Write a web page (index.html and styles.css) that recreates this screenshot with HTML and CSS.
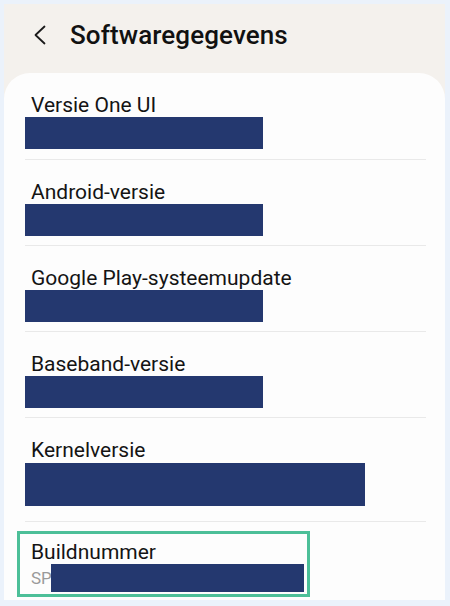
FILE: index.html
```html
<!DOCTYPE html>
<html lang="nl">
<head>
    <meta charset="UTF-8">
    <meta name="viewport" content="width=device-width, initial-scale=1.0">
    <title>Softwaregegevens</title>
    <link rel="stylesheet" href="styles.css">
</head>
<body>
    <div class="screen">
        <div class="app-bar">
            <button class="back-btn" aria-label="Terug">
                <svg xmlns="http://www.w3.org/2000/svg" width="14" height="20" viewBox="0 0 14 20" fill="none" stroke="#1a1a1a" stroke-width="1.8" stroke-linecap="round" stroke-linejoin="round">
                    <polyline points="11.5 1.5 2.5 10 11.5 18.5"></polyline>
                </svg>
            </button>
            <h1>Softwaregegevens</h1>
        </div>

        <div class="card">
            <div class="info-row">
                <div class="label">Versie One UI</div>
                <div class="redacted"></div>
            </div>
            <div class="info-row">
                <div class="label">Android-versie</div>
                <div class="redacted"></div>
            </div>
            <div class="info-row">
                <div class="label">Google Play-systeemupdate</div>
                <div class="redacted"></div>
            </div>
            <div class="info-row">
                <div class="label">Baseband-versie</div>
                <div class="redacted"></div>
            </div>
            <div class="info-row info-row-tall">
                <div class="label">Kernelversie</div>
                <div class="redacted redacted-wide"></div>
            </div>
            <div class="info-row info-row-last">
                <div class="highlight">
                    <div class="label">Buildnummer</div>
                    <div class="value-line">
                        <span class="value">SP</span>
                        <div class="redacted redacted-build"></div>
                    </div>
                </div>
            </div>
        </div>
    </div>
</body>
</html>
```

FILE: styles.css
```css
* {
    margin: 0;
    padding: 0;
    box-sizing: border-box;
    font-family: Roboto, 'Noto Sans', sans-serif;
}

body {
    width: 450px;
    height: 606px;
    background-color: #ebf2fb;
    padding: 4px 5px 6px 4px;
}

.screen {
    height: 100%;
    background-color: #f4f1ed;
    display: flex;
    flex-direction: column;
}

.app-bar {
    height: 69px;
    display: flex;
    align-items: center;
    padding-left: 29px;
    padding-bottom: 8px;
}

.back-btn {
    background: none;
    border: none;
    display: flex;
    align-items: center;
    width: 14px;
    height: 20px;
}

.app-bar h1 {
    margin-left: 23px;
    font-size: 26px;
    font-weight: 500;
    color: #111;
    letter-spacing: 0.1px;
}

.card {
    flex: 1;
    background-color: #fdfdfd;
    border-radius: 26px 26px 0 0;
    padding: 20px 19px 0 21px;
}

.info-row {
    padding: 20px 0 9px;
    border-bottom: 1px solid #e9e9e9;
}

.info-row:first-child {
    padding-top: 0;
    padding-bottom: 10px;
}

.label {
    padding-left: 6px;
    font-size: 21px;
    line-height: 24px;
    color: #141414;
}

.redacted {
    width: 238px;
    height: 32px;
    background-color: #24386f;
}

.info-row-tall {
    padding-bottom: 15px;
}

.redacted-wide {
    width: 340px;
    height: 43px;
    margin-top: 1px;
}

.info-row-last {
    border-bottom: none;
    padding: 9px 0 0;
}

.highlight {
    width: 293px;
    margin-left: -8px;
    border: 3px solid #4cbf98;
    padding: 7px 3px 2px 11px;
}

.highlight .label {
    padding-left: 0;
    line-height: 23px;
}

.value-line {
    display: flex;
    align-items: center;
}

.value {
    width: 20px;
    font-size: 17px;
    color: #9a9a9a;
}

.redacted-build {
    width: 253px;
    height: 28px;
}
```
